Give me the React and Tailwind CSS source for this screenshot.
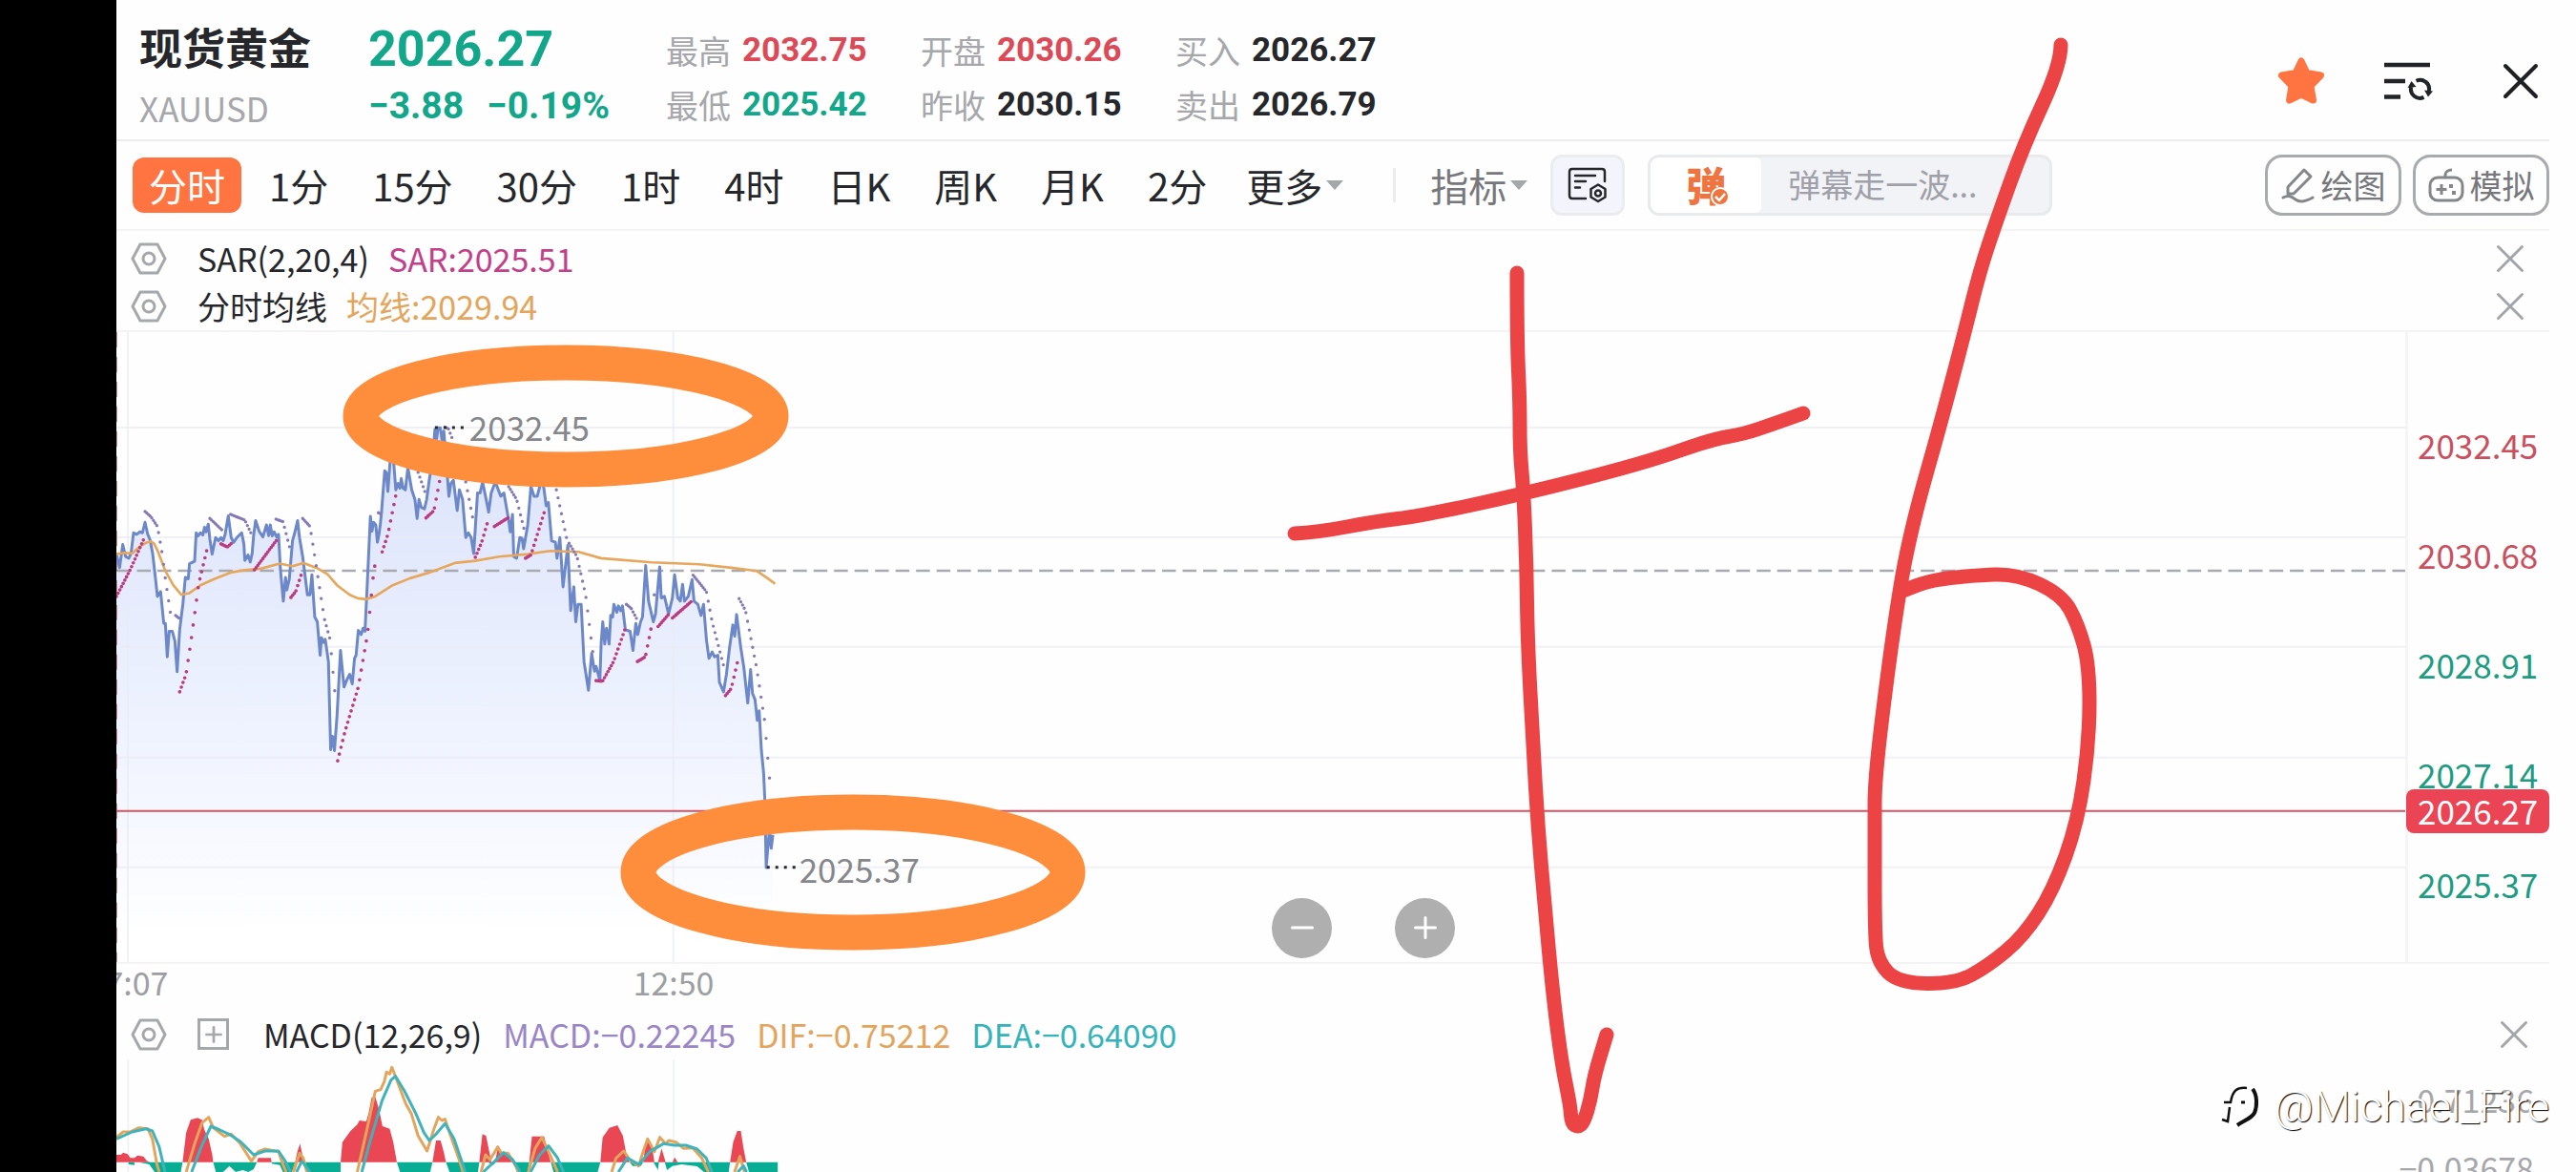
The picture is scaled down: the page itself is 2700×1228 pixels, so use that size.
import { useState } from "react";
import { X, Minus, Plus } from "lucide-react";

const periods = [
  "分时",
  "1分",
  "15分",
  "30分",
  "1时",
  "4时",
  "日K",
  "周K",
  "月K",
  "2分",
];

const quotes = [
  [
    { label: "最高", value: "2032.75", color: "text-[#dc4a58]" },
    { label: "最低", value: "2025.42", color: "text-[#12a68a]" },
  ],
  [
    { label: "开盘", value: "2030.26", color: "text-[#dc4a58]" },
    { label: "昨收", value: "2030.15", color: "text-[#26272b]" },
  ],
  [
    { label: "买入", value: "2026.27", color: "text-[#26272b]" },
    { label: "卖出", value: "2026.79", color: "text-[#26272b]" },
  ],
];

const axisLabels = [
  { value: "2032.45", color: "text-[#c9505e]" },
  { value: "2030.68", color: "text-[#c9505e]" },
  { value: "2028.91", color: "text-[#1c9c82]" },
  { value: "2027.14", color: "text-[#1c9c82]" },
  { value: "2025.37", color: "text-[#1c9c82]" },
];

// Chart data, three units to a pixel
const priceLine =
  "36,690 46,735 56,662 65,700 75,705 82,690 90,625 100,630 110,622 118,625 126,592 134,628 142,648 150,690 158,760 165,825 175,810 185,910 190,910 196,1015 202,935 212,935 220,965 227,1062 235,930 245,850 253,765 262,770 266,722 282,715 287,625 293,635 300,625 308,632 313,608 318,622 325,598 330,645 337,692 348,640 357,650 365,640 372,650 378,630 388,572 397,640 405,655 415,640 430,625 437,660 440,712 450,695 457,717 463,690 468,630 474,587 485,620 497,638 508,600 515,634 520,600 526,635 532,622 540,638 546,630 552,740 561,840 568,765 572,805 580,770 590,650 597,625 606,587 612,640 622,700 637,820 645,820 651,757 660,890 668,905 677,1010 681,955 688,970 693,960 703,1030 710,1307 716,1265 722,1310 730,1200 741,995 752,1110 762,1085 770,1070 778,1100 785,1020 790,1010 797,932 806,945 812,925 818,935 825,790 835,573 840,620 845,592 852,600 857,655 862,630 866,600 870,560 880,430 885,435 890,495 897,400 908,400 915,490 922,470 928,485 932,455 938,485 945,490 953,420 965,490 975,520 982,580 988,520 995,545 1005,550 1012,520 1020,460 1030,400 1038,300 1043,330 1048,295 1055,295 1062,345 1066,305 1075,420 1082,510 1088,470 1096,460 1108,555 1115,490 1125,520 1135,640 1143,625 1152,640 1160,690 1172,500 1180,500 1188,465 1207,560 1215,500 1228,465 1245,510 1255,500 1270,585 1275,622 1282,567 1286,700 1295,705 1305,640 1312,642 1317,675 1330,600 1340,480 1350,510 1360,510 1370,470 1380,480 1388,540 1395,530 1405,650 1417,655 1422,705 1431,640 1441,795 1456,665 1465,870 1475,795 1481,905 1488,850 1498,850 1507,1030 1521,1120 1531,1005 1540,1060 1545,1045 1557,1090 1561,970 1566,905 1572,975 1578,925 1586,975 1591,885 1597,890 1601,850 1610,875 1615,855 1622,870 1628,855 1637,930 1652,935 1661,995 1670,910 1676,945 1685,905 1691,890 1701,728 1710,840 1725,905 1732,880 1745,732 1750,830 1760,825 1773,880 1785,830 1792,757 1802,830 1810,840 1817,787 1823,840 1835,825 1847,772 1853,840 1865,850 1875,885 1883,850 1892,960 1900,1020 1910,1000 1918,1015 1928,1010 1933,1095 1946,1125 1955,1070 1965,985 1975,915 1981,950 1987,882 2000,985 2010,1050 2022,1160 2031,1055 2037,1130 2045,1150 2052,1215 2058,1185 2065,1310 2072,1380 2076,1470 2080,1678 2090,1560 2096,1617 2101,1575";

const averageLine =
  "36,692 60,688 85,690 110,668 130,656 145,652 155,660 165,680 190,745 215,790 240,820 265,815 300,790 345,770 395,750 440,742 490,738 550,722 590,730 625,720 665,735 700,755 730,790 770,820 795,831 820,834 850,825 905,790 960,768 1020,750 1100,720 1165,713 1240,700 1330,692 1400,682 1490,685 1560,705 1720,718 1870,724 1970,735 2050,745 2080,765 2108,785";

const sarAbove = [
  [[126, 558], [145, 575], [165, 605], [180, 690], [190, 770], [210, 905]],
  [[222, 885], [235, 895]],
  [[330, 580], [370, 618]],
  [[395, 567], [440, 585], [462, 632]],
  [[538, 582], [560, 590], [582, 675]],
  [[622, 580], [645, 605], [660, 700], [690, 895], [708, 960], [726, 1158]],
  [[860, 562], [868, 566]],
  [[985, 435], [1008, 500]],
  [[1070, 293], [1080, 297], [1095, 335]],
  [[1135, 465], [1160, 595]],
  [[1270, 480], [1295, 520], [1320, 620]],
  [[1420, 490], [1455, 655]],
  [[1460, 658], [1485, 700], [1512, 820], [1535, 1005]],
  [[1640, 850], [1655, 862], [1675, 900]],
  [[1728, 820], [1732, 824]],
  [[1850, 758], [1892, 810], [1910, 905], [1948, 1050]],
  [[1995, 832], [2015, 870], [2050, 1050], [2075, 1215], [2095, 1450]],
];

const sarBelow = [
  [[36, 825], [80, 740], [122, 645]],
  [[235, 1125], [255, 1070], [270, 970], [295, 785], [325, 660]],
  [[365, 660], [385, 670], [398, 658]],
  [[470, 742], [540, 648]],
  [[585, 828], [600, 810], [618, 755]],
  [[732, 1342], [755, 1250], [797, 1110], [826, 943], [845, 750], [853, 705]],
  [[872, 685], [890, 630], [917, 497]],
  [[1010, 578], [1035, 555], [1055, 450]],
  [[1165, 702], [1185, 655], [1207, 580]],
  [[1225, 605], [1268, 578]],
  [[1323, 705], [1340, 695], [1382, 560]],
  [[1545, 1090], [1565, 1092], [1600, 1030], [1637, 925]],
  [[1675, 1030], [1700, 1015], [1722, 905]],
  [[1740, 920], [1777, 877]],
  [[1785, 893], [1848, 838]],
  [[1952, 1137], [1970, 1115], [1992, 1022]],
];

const macdUp = [
  "25,713 25,690 35,690 40,683 50,688 56,700 65,700 72,692 85,695 92,708 100,713",
  "172,713 180,620 190,580 205,574 215,580 220,610 230,640 238,690 240,713",
  "337,713 340,700 368,700 370,713",
  "422,713 427,680 433,655 438,690 442,713",
  "523,713 527,650 545,615 560,595 565,582 580,585 585,560 592,510 600,508 608,545 616,600 632,608 640,650 648,713",
  "727,713 735,645 745,645 752,680 757,713",
  "831,713 838,625 846,630 858,713",
  "866,713 872,670 880,685 895,690 908,713",
  "942,713 948,632 975,632 985,690 990,713",
  "1100,713 1105,635 1120,605 1138,597 1150,630 1158,690 1165,713",
  "1195,713 1200,660 1205,635 1215,665 1220,713",
  "1228,713 1236,670 1245,713",
  "1260,713 1265,698 1272,713",
  "1388,713 1395,650 1404,615 1412,615 1418,670 1424,713",
];

const macdDown = [
  "52,713 65,713 65,722 52,720",
  "75,713 172,713 168,744 110,744 98,720",
  "240,713 337,713 330,735 318,744 306,738 290,744 276,725 262,744 246,744",
  "370,713 422,713 415,744 395,744 388,722 370,718",
  "442,713 523,713 523,744 448,744",
  "648,713 727,713 722,744 655,744",
  "757,713 831,713 828,744 765,744",
  "850,713 868,713 862,722",
  "908,713 942,713 938,744 914,744",
  "990,713 1100,713 1094,744 996,744",
  "1165,713 1195,713 1190,725 1172,725",
  "1218,713 1230,713 1228,738",
  "1243,713 1388,713 1385,744 1330,744 1315,726 1280,720 1260,725 1248,738",
  "1424,713 1494,713 1494,744 1430,744",
];

const difLines = [
  "25,635 40,618 55,618 75,605 95,608 105,640 115,720 120,744",
  "180,744 200,650 215,590 230,572 240,605 265,632 280,625 300,655 325,710 340,680 355,672 385,680 395,720 402,744",
  "418,744 432,685 440,700 448,744",
  "560,744 580,620 600,490 612,485 620,460 625,430 632,436 637,415 645,445 668,530 680,560 695,630 715,678 730,610 740,572 748,582 755,578 765,620 785,700 795,744",
  "835,744 845,690 855,705 872,665 880,685 895,685 912,725 918,744",
  "940,744 955,670 970,635 985,680 1005,744",
  "1125,744 1135,700 1152,678 1165,705 1185,725 1195,680 1205,640 1220,680 1232,635 1245,655 1252,645 1268,650 1285,670 1305,668 1325,700 1340,744",
  "1398,744 1410,695 1420,744",
];

const deaLines = [
  "25,640 60,618 90,608 105,615 120,665 133,744",
  "192,744 215,660 235,600 255,612 275,625 300,648 330,690 355,678 385,678 400,710 412,744",
  "425,744 437,710 455,744",
  "570,744 590,640 615,520 635,455 645,443 665,490 690,560 708,620 720,645 735,625 755,592 775,640 800,744",
  "840,744 858,720 885,683 905,705 922,744",
  "945,744 965,690 985,662 1005,700 1018,744",
  "1140,744 1160,700 1185,720 1210,680 1240,655 1265,660 1290,660 1315,672 1335,700 1348,744",
  "1405,744 1418,725 1425,744",
];

// Freehand strokes drawn over the page
const strokes = [
  [
    [1590, 286], [1590, 357], [1593, 421], [1593, 472], [1597, 516], [1600, 593],
    [1601, 669], [1607, 784], [1612, 867], [1619, 949], [1628, 1045], [1637, 1115],
    [1646, 1159], [1647, 1177], [1654, 1181], [1660, 1176], [1667, 1153], [1671, 1127],
    [1684, 1084],
  ],
  [
    [1357, 559], [1380, 558], [1443, 546], [1487, 541], [1595, 518], [1724, 485],
    [1795, 460], [1827, 455], [1862, 443], [1890, 433],
  ],
  [
    [2160, 47], [2160, 68], [2121, 152], [2093, 230], [2075, 284], [2058, 353],
    [2032, 451], [2011, 525], [1998, 580], [1990, 625], [1979, 701], [1965, 816],
    [1965, 867], [1965, 975], [1968, 1008], [1990, 1030], [2049, 1031], [2084, 1012],
    [2121, 981], [2152, 933], [2178, 861], [2190, 775], [2190, 697], [2178, 654],
    [2161, 623], [2114, 601], [2066, 603], [2023, 608], [1992, 620],
  ],
];

// Rounds the corners by running curves through the midpoints
const smoothPath = (points) => {
  let d = `M${points[0][0]} ${points[0][1]}`;
  for (let i = 1; i < points.length - 1; i++) {
    const [x, y] = points[i];
    const [nx, ny] = points[i + 1];
    d += ` Q${x} ${y} ${(x + nx) / 2} ${(y + ny) / 2}`;
  }
  const last = points[points.length - 1];
  return `${d} L${last[0]} ${last[1]}`;
};

// One dot for each bar, all of them in one path of round-capped points
const dotPath = (points) => {
  let d = "";
  let i = 0;
  for (let x = points[0][0]; x <= points[points.length - 1][0]; x += 5.3) {
    while (x > points[i + 1][0]) i++;
    const [x1, y1] = points[i];
    const [x2, y2] = points[i + 1];
    const y = y1 + ((y2 - y1) * (x - x1)) / (x2 - x1);
    d += `M${x.toFixed(1)} ${y.toFixed(1)}h0.1`;
  }
  return d;
};

const SettingButton = ({ label }) => (
  <button aria-label={label} className="w-[38px] shrink-0">
    <svg viewBox="0 0 38 34" className="block w-full" fill="none" stroke="#a6a7ab" strokeWidth="3">
      <path d="M2 17 10 2h18l8 15-8 15H10z" strokeLinejoin="round" />
      <circle cx="19" cy="17" r="6" />
    </svg>
  </button>
);

const CloseButton = ({ label }) => (
  <button aria-label={label} className="mr-4 shrink-0 text-[#a3a5aa]">
    <X size={50} strokeWidth={1.4} className="block" />
  </button>
);

const StarIcon = () => (
  <svg width="52" height="52" viewBox="0 0 52 52">
    <path
      d="M26 5l6 12.500 14.500 2.500-10.500 11 2.500 15L26 40l-12.500 6 2.500-15L5.500 20 20 17.500z"
      fill="#ff7440"
      stroke="#ff7440"
      strokeWidth="7"
      strokeLinejoin="round"
    />
  </svg>
);

const ListRefreshIcon = () => (
  <svg width="52" height="44" viewBox="0 0 52 44" fill="none" stroke="#222326" strokeWidth="4.500">
    <path d="M1 5h48M1 22h22M1 38.500h17" />
    <path d="M34.500 21.700A9.500 9.500 0 0 1 47.800 32.500M42.500 38.900A9.500 9.500 0 0 1 29.200 28.100" strokeWidth="4" />
    <path d="M25.500 29l9-1-5-6zM43 31.500l9 1-5 6z" fill="#222326" stroke="none" />
  </svg>
);

const PenIcon = () => (
  <svg width="36" height="38" viewBox="0 0 36 38" fill="none" stroke="#85868a" strokeWidth="3" strokeLinejoin="round">
    <path d="M7 28V21L24 3l7 7-18 18z" />
    <path d="M2 32c6-3 9-1 13 2s11 2 18-2" strokeLinecap="round" />
  </svg>
);

const GamepadIcon = () => (
  <svg width="38" height="36" viewBox="0 0 38 36" fill="none" stroke="#85868a" strokeWidth="3">
    <rect x="2" y="10" width="34" height="24" rx="8" />
    <path d="M18 10V7c0-3 3-5 7-5M14 17v11M8.500 22.500h11" />
    <path d="M22 19h4M25 26h4" strokeWidth="4" />
  </svg>
);

const NoteSettingIcon = () => (
  <svg width="42" height="38" viewBox="0 0 42 38" fill="none" stroke="#26272b" strokeWidth="2.500" strokeLinecap="round" strokeLinejoin="round">
    <path d="M39 15V5q0-3-3-3H5Q2 2 2 5v25q0 3 3 3h14" />
    <path d="M8 9h21M8 15h11M8 21.500h5" />
    <path d="M32 18.500l7.500 4.500v8.500L32 36l-7.500-4.500V23z" />
    <circle cx="32" cy="27.500" r="3" />
  </svg>
);

const Header = () => (
  <header className="flex items-center border-b-2 border-[#ececee] h-[148px] pt-4">
    <div className="ml-6 w-[240px] pt-1">
      <h1 className="text-[45px] leading-[60px] font-bold text-[#26272b]">现货黄金</h1>
      <p className="text-[35px] leading-[68px] text-[#a6a7ab]">XAUUSD</p>
    </div>
    <div className="w-[312px] font-[Roboto] font-bold text-[#12a68a]">
      <p className="text-[52px] leading-[60px]">2026.27</p>
      <p className="flex gap-6 text-[39px] leading-[58px]">
        <span>−3.88</span>
        <span>−0.19%</span>
      </p>
    </div>
    <div className="flex gap-[60px]">
      {quotes.map((column) => (
        <dl key={column[0].label}>
          {column.map((item) => (
            <div key={item.label} className="flex items-center gap-3 leading-[57px]">
              <dt className="text-[34px] text-[#a6a7ab]">{item.label}</dt>
              <dd className={`w-[127px] font-[Roboto] text-[35px] font-bold ${item.color}`}>{item.value}</dd>
            </div>
          ))}
        </dl>
      ))}
    </div>
    <div className="-mr-[2px] ml-auto flex items-center gap-[60px] pt-2">
      <button aria-label="自选">
        <StarIcon />
      </button>
      <button aria-label="切换列表">
        <ListRefreshIcon />
      </button>
      <button aria-label="关闭" className="text-[#1f2023]">
        <X size={64} strokeWidth={1.5} />
      </button>
    </div>
  </header>
);

const Toolbar = () => {
  const [active, setActive] = useState("分时");
  const [comment, setComment] = useState("");

  return (
    <nav className="flex items-center border-b-2 border-[#f3f3f4] h-[94px] pl-[17px] text-[40px] text-[#26272b]">
      <div className="flex gap-3">
        {periods.map((period) => (
          <button
            key={period}
            onClick={() => setActive(period)}
            className={`h-[58px] rounded-xl px-[17px] leading-[54px] whitespace-nowrap ${
              active === period ? "bg-[#ff7440] text-white" : ""
            }`}
          >
            {period}
          </button>
        ))}
        <button className="flex items-center gap-1 pl-3 leading-[54px]">
          更多
          <span className="border-x-[9px] border-t-[10px] border-x-transparent border-t-[#a6a7ab]" />
        </button>
      </div>
      <span className="ml-[52px] h-9 w-[3px] bg-[#ececee]" />
      <button className="ml-9 flex items-center gap-1 leading-[54px] text-[#77787c]">
        指标
        <span className="border-x-[9px] border-t-[10px] border-x-transparent border-t-[#a6a7ab]" />
      </button>
      <button
        aria-label="指标设置"
        className="ml-6 flex h-[64px] w-[78px] items-center justify-center rounded-xl border-3 border-[#ececef] bg-[#f4f5fc]"
      >
        <NoteSettingIcon />
      </button>
      <div className="ml-6 flex h-[64px] w-[424px] overflow-hidden rounded-xl border-3 border-[#e9eaec] bg-[#f2f3f7]">
        <button className="relative flex w-[116px] items-center justify-center rounded-r-md bg-white pb-1 text-[42px] font-black text-[#f0743f]">
          弹
          <svg className="absolute right-[33px] bottom-[7px]" width="20" height="20" viewBox="0 0 20 20">
            <circle cx="10" cy="10" r="9" fill="#f0743f" stroke="#fff" strokeWidth="2" />
            <path d="M5 10l4 4 6-7" fill="none" stroke="#fff" strokeWidth="2.500" />
          </svg>
        </button>
        <input
          aria-label="弹幕"
          placeholder="弹幕走一波..."
          value={comment}
          onChange={(e) => setComment(e.target.value)}
          className="w-[280px] bg-transparent pb-1 pl-7 text-[34px] text-[#26272b] outline-none placeholder:text-[#a0a1a8]"
        />
      </div>
      <div className="ml-auto flex gap-3 text-[34px] leading-[54px] text-[#77787c]">
        <button className="flex h-[64px] w-[143px] items-center justify-center gap-[6px] rounded-[18px] border-3 border-[#a9aaad]">
          <PenIcon />
          绘图
        </button>
        <button className="flex h-[64px] w-[143px] items-center justify-center gap-[6px] rounded-[18px] border-3 border-[#a9aaad]">
          <GamepadIcon />
          模拟
        </button>
      </div>
    </nav>
  );
};

const PriceChart = () => (
  <section className="border-b-2 border-[#f3f3f4]">
    <div className="flex">
      <div className="relative flex-1 border-r-3 border-[#f5f5f6]">
        <svg viewBox="0 0 2400 660" className="block w-full">
          <defs>
            <linearGradient id="area" gradientUnits="userSpaceOnUse" x1="0" y1="300" x2="0" y2="1900">
              <stop offset="0" stopColor="#dbe3fa" />
              <stop offset="0.600" stopColor="#eff3ff" />
              <stop offset="1" stopColor="#ffffff" />
            </linearGradient>
          </defs>
          <g transform="translate(-12 2) scale(0.33333)" fill="none">
            <polygon points={`36,1960 ${priceLine} 2101,1960`} fill="url(#area)" />
          </g>
          <g stroke="#e9ebf2" strokeOpacity="0.700" strokeWidth="2">
            <path d="M0 100h2400M0 215h2400M0 330h2400M0 446h2400M0 561h2400" />
            <path d="M12 0v660M584 0v660" />
          </g>
          <path d="M0 250h2400" stroke="#a8aaaf" strokeWidth="2.500" strokeDasharray="14.500 7" />
          <path d="M0 0v660" stroke="#b0505c" strokeOpacity="0.600" strokeWidth="2" strokeDasharray="16 10" />
          <g transform="translate(-12 2) scale(0.33333)" fill="none" strokeLinejoin="round">
            <polyline points={priceLine} stroke="#6d88c8" strokeWidth="9" />
            <polyline points={averageLine} stroke="#e6a75c" strokeWidth="8" />
            <g stroke="#8579b5" strokeWidth="10" strokeLinecap="round">
              {sarAbove.map((points) => (
                <path key={points[0][0]} d={dotPath(points)} />
              ))}
            </g>
            <g stroke="#bb3a80" strokeWidth="11" strokeLinecap="round">
              {sarBelow.map((points) => (
                <path key={points[0][0]} d={dotPath(points)} />
              ))}
            </g>
          </g>
          <path d="M0 502h2400" stroke="#cf5563" strokeWidth="2" />
          <path d="M334 100h32M682 561h32" stroke="#26272b" strokeWidth="3" strokeDasharray="3 6" />
          <g fill="#86878b" fontSize="35">
            <text x="370" y="114">2032.45</text>
            <text x="716" y="577">2025.37</text>
          </g>
        </svg>
        <div className="absolute bottom-1 left-[50.5%] flex gap-[66px] text-white">
          <button aria-label="缩小" className="flex size-[63px] items-center justify-center rounded-full bg-[#afafaf]">
            <Minus size={36} />
          </button>
          <button aria-label="放大" className="flex size-[63px] items-center justify-center rounded-full bg-[#afafaf]">
            <Plus size={36} />
          </button>
        </div>
      </div>
      <div className="relative flex w-[148px] flex-col pt-[60px] pl-[10px] text-[35px]">
        {axisLabels.map((label) => (
          <span key={label.value} className={`h-[115px] leading-[115px] ${label.color}`}>
            {label.value}
          </span>
        ))}
        <span className="absolute inset-x-0 top-[479px] -ml-[2px] h-[46px] rounded-lg bg-[#ea4455] pl-3 leading-[44px] text-white">
          2026.27
        </span>
      </div>
    </div>
  </section>
);

const MacdPanel = () => (
  <section className="relative">
    <div className="flex h-[60px] items-center gap-[22px] pt-2 pl-[15px] text-[34px]">
      <SettingButton label="MACD设置" />
      <button aria-label="添加指标" className="mr-[14px] ml-[10px] flex size-[33px] items-center justify-center border-3 border-[#a6a7ab] text-[#a6a7ab]">
        <Plus size={26} strokeWidth={2.5} />
      </button>
      <span className="text-[#26272b]">MACD(12,26,9)</span>
      <span className="text-[#9a85c6]">MACD:−0.22245</span>
      <span className="text-[#e3a55c]">DIF:−0.75212</span>
      <span className="text-[#35b3bb]">DEA:−0.64090</span>
      <span className="flex-1" />
      <div className="-mr-1 flex">
        <CloseButton label="关闭MACD" />
      </div>
    </div>
    <div className="flex h-[118px]">
      <svg viewBox="25 390 5086 354" preserveAspectRatio="none" className="h-full flex-1">
        <path d="M51 390v354M1263 390v354" stroke="#f1f2f5" strokeWidth="4" />
        {macdUp.map((points) => (
          <polygon key={points} points={points} fill="#ea4755" />
        ))}
        {macdDown.map((points) => (
          <polygon key={points} points={points} fill="#08ae93" />
        ))}
        <g fill="none" strokeWidth="3" strokeLinejoin="round">
          {difLines.map((points) => (
            <polyline key={points} points={points} stroke="#e3a55c" vectorEffect="non-scaling-stroke" />
          ))}
          {deaLines.map((points) => (
            <polyline key={points} points={points} stroke="#3fb2ba" vectorEffect="non-scaling-stroke" />
          ))}
        </g>
      </svg>
      <div className="flex w-[150px] flex-col items-end gap-5 pt-4 pr-4 text-[34px] leading-[52px] text-[#a6a7ab]">
        <span>0.71236</span>
        <span className="whitespace-nowrap">−0.03678</span>
      </div>
    </div>
    <div className="absolute right-0 bottom-[38px] flex items-center gap-4 text-[45px] leading-[60px] text-white [text-shadow:1px_1px_1px_#000]">
      <svg width="40" height="44" viewBox="0 0 40 44" fill="none" stroke="#111" strokeWidth="3">
        <path d="M27 2c-10-1-15 2-17 15H3M9 22L7 37l-6-2" strokeWidth="2.500" />
        <path d="M33 3c5 6 5 18 2 25-3 6-11 8-18 13" strokeWidth="4" />
        <path d="M21 17h4" />
      </svg>
      <span className="font-[Roboto] font-light">@Michael_Fire</span>
    </div>
  </section>
);

const Marks = () => (
  <svg
    viewBox="0 0 2700 1228"
    className="pointer-events-none absolute inset-0 h-full w-full"
    fill="none"
    strokeLinecap="round"
    strokeLinejoin="round"
  >
    <g stroke="#ff8e3c" strokeWidth="37">
      <ellipse cx="593" cy="436" rx="215" ry="56" />
      <ellipse cx="894" cy="914" rx="225" ry="63" />
    </g>
    <g stroke="#ec4444" strokeWidth="15">
      {strokes.map((points, i) => (
        <path key={i} d={smoothPath(points)} />
      ))}
    </g>
  </svg>
);

const App = () => {
  return (
    <div className="relative flex h-screen overflow-hidden bg-[#fefefe] font-['Noto_Sans_CJK_SC',sans-serif]">
      <div className="w-[122px] shrink-0 bg-black" />
      <main className="mr-7 flex-1">
        <Header />
        <Toolbar />
        <section className="border-b-2 border-[#f3f3f4] pt-1 pl-[15px] text-[34px] leading-[48px]">
          <div className="flex h-[50px] items-center">
            <SettingButton label="SAR设置" />
            <span className="ml-8 text-[#26272b]">SAR(2,20,4)</span>
            <span className="ml-5 flex-1 text-[#c2408a]">SAR:2025.51</span>
            <CloseButton label="关闭SAR" />
          </div>
          <div className="flex h-[50px] items-center">
            <SettingButton label="均线设置" />
            <span className="ml-8 text-[#26272b]">分时均线</span>
            <span className="ml-5 flex-1 text-[#e3a55c]">均线:2029.94</span>
            <CloseButton label="关闭均线" />
          </div>
        </section>
        <PriceChart />
        <div className="relative h-10 overflow-hidden text-[34px] leading-[38px] text-[#9d9ea2]">
          <span className="absolute left-[12px] -translate-x-1/2">17:07</span>
          <span className="absolute left-[584px] -translate-x-1/2">12:50</span>
        </div>
        <MacdPanel />
      </main>
      <Marks />
    </div>
  );
};

export default App;
